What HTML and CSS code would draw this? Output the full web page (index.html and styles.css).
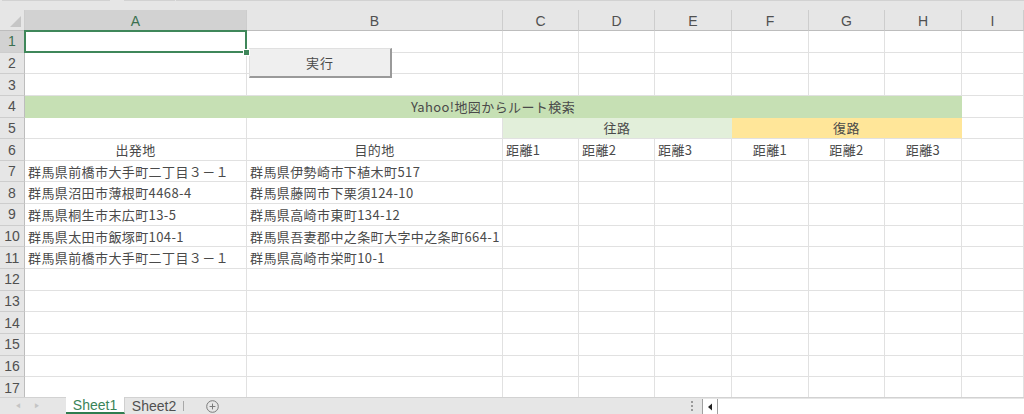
FILE: index.html
```html
<!DOCTYPE html>
<html lang="ja">
<head>
    <meta charset="UTF-8">
    <title>Sheet1</title>
    <link rel="stylesheet" href="styles.css">
</head>
<body>
    <div class="formula-edge">
        <span class="edge-box edge-1"></span>
        <span class="edge-box edge-2"></span>
        <span class="edge-box edge-3"></span>
    </div>

    <div class="sheet-wrap">
        <div class="sheet">
            <div class="corner"></div>
            <div class="col-head sel">A</div>
            <div class="col-head">B</div>
            <div class="col-head">C</div>
            <div class="col-head">D</div>
            <div class="col-head">E</div>
            <div class="col-head">F</div>
            <div class="col-head">G</div>
            <div class="col-head">H</div>
            <div class="col-head">I</div>

            <div class="row-head sel">1</div>
            <div class="cell active"><span class="handle"></span></div>
            <div class="cell"></div><div class="cell"></div><div class="cell"></div><div class="cell"></div>
            <div class="cell"></div><div class="cell"></div><div class="cell"></div><div class="cell"></div>

            <div class="row-head">2</div>
            <div class="cell"></div><div class="cell"></div><div class="cell"></div><div class="cell"></div><div class="cell"></div>
            <div class="cell"></div><div class="cell"></div><div class="cell"></div><div class="cell"></div>

            <div class="row-head">3</div>
            <div class="cell"></div><div class="cell"></div><div class="cell"></div><div class="cell"></div><div class="cell"></div>
            <div class="cell"></div><div class="cell"></div><div class="cell"></div><div class="cell"></div>

            <div class="row-head">4</div>
            <div class="cell center title">Yahoo!地図からルート検索</div>
            <div class="cell"></div>

            <div class="row-head">5</div>
            <div class="cell"></div><div class="cell"></div>
            <div class="cell center going">往路</div>
            <div class="cell center back">復路</div>
            <div class="cell"></div>

            <div class="row-head">6</div>
            <div class="cell center">出発地</div>
            <div class="cell center">目的地</div>
            <div class="cell">距離1</div>
            <div class="cell">距離2</div>
            <div class="cell">距離3</div>
            <div class="cell center">距離1</div>
            <div class="cell center">距離2</div>
            <div class="cell center">距離3</div>
            <div class="cell"></div>

            <div class="row-head">7</div>
            <div class="cell">群馬県前橋市大手町二丁目３－１</div>
            <div class="cell">群馬県伊勢崎市下植木町517</div>
            <div class="cell"></div><div class="cell"></div><div class="cell"></div><div class="cell"></div>
            <div class="cell"></div><div class="cell"></div><div class="cell"></div>

            <div class="row-head">8</div>
            <div class="cell">群馬県沼田市薄根町4468-4</div>
            <div class="cell">群馬県藤岡市下栗須124-10</div>
            <div class="cell"></div><div class="cell"></div><div class="cell"></div><div class="cell"></div>
            <div class="cell"></div><div class="cell"></div><div class="cell"></div>

            <div class="row-head">9</div>
            <div class="cell">群馬県桐生市末広町13-5</div>
            <div class="cell">群馬県高崎市東町134-12</div>
            <div class="cell"></div><div class="cell"></div><div class="cell"></div><div class="cell"></div>
            <div class="cell"></div><div class="cell"></div><div class="cell"></div>

            <div class="row-head">10</div>
            <div class="cell">群馬県太田市飯塚町104-1</div>
            <div class="cell overflow">群馬県吾妻郡中之条町大字中之条町664-1</div>
            <div class="cell"></div><div class="cell"></div><div class="cell"></div><div class="cell"></div>
            <div class="cell"></div><div class="cell"></div><div class="cell"></div>

            <div class="row-head">11</div>
            <div class="cell">群馬県前橋市大手町二丁目３－１</div>
            <div class="cell">群馬県高崎市栄町10-1</div>
            <div class="cell"></div><div class="cell"></div><div class="cell"></div><div class="cell"></div>
            <div class="cell"></div><div class="cell"></div><div class="cell"></div>

            <div class="row-head">12</div>
            <div class="cell"></div><div class="cell"></div><div class="cell"></div><div class="cell"></div><div class="cell"></div>
            <div class="cell"></div><div class="cell"></div><div class="cell"></div><div class="cell"></div>

            <div class="row-head">13</div>
            <div class="cell"></div><div class="cell"></div><div class="cell"></div><div class="cell"></div><div class="cell"></div>
            <div class="cell"></div><div class="cell"></div><div class="cell"></div><div class="cell"></div>

            <div class="row-head">14</div>
            <div class="cell"></div><div class="cell"></div><div class="cell"></div><div class="cell"></div><div class="cell"></div>
            <div class="cell"></div><div class="cell"></div><div class="cell"></div><div class="cell"></div>

            <div class="row-head">15</div>
            <div class="cell"></div><div class="cell"></div><div class="cell"></div><div class="cell"></div><div class="cell"></div>
            <div class="cell"></div><div class="cell"></div><div class="cell"></div><div class="cell"></div>

            <div class="row-head">16</div>
            <div class="cell"></div><div class="cell"></div><div class="cell"></div><div class="cell"></div><div class="cell"></div>
            <div class="cell"></div><div class="cell"></div><div class="cell"></div><div class="cell"></div>

            <div class="row-head">17</div>
            <div class="cell"></div><div class="cell"></div><div class="cell"></div><div class="cell"></div><div class="cell"></div>
            <div class="cell"></div><div class="cell"></div><div class="cell"></div><div class="cell"></div>
        </div>

        <button class="run-button">実行</button>
    </div>

    <div class="tab-bar">
        <div class="tab-nav">
            <span class="nav-arrow">&#9664;</span>
            <span class="nav-arrow">&#9654;</span>
        </div>
        <div class="tab active-tab">Sheet1</div>
        <div class="tab">Sheet2</div>
        <span class="tab-sep"></span>
        <svg class="add-sheet" width="13" height="13" viewBox="0 0 13 13">
            <circle cx="6.5" cy="6.5" r="5.8" fill="none" stroke="#7a7a7a" stroke-width="1"/>
            <path d="M6.5 3.6v5.8M3.6 6.5h5.8" stroke="#7a7a7a" stroke-width="1"/>
        </svg>
        <div class="tab-spacer"></div>
        <div class="split-dots"><i></i><i></i><i></i></div>
        <div class="hscroll">
            <span class="hscroll-btn">
                <svg width="6" height="8" viewBox="0 0 6 8"><path d="M5 0.5v7L1 4z" fill="#222"/></svg>
            </span>
            <span class="hscroll-track"></span>
        </div>
    </div>
</body>
</html>
```

FILE: styles.css
```css
:root {
    --header-bg: #e6e6e6;
    --header-sel: #d2d2d2;
    --grid-line: #e1e1e1;
    --header-line: #cdcdcd;
    --text-color: #4a4a4a;
    --excel-green: #3f875a;
}

body {
    margin: 0;
    width: 1024px;
    height: 414px;
    overflow: hidden;
    background: #ffffff;
    font-family: "Noto Sans CJK JP", "Noto Sans", sans-serif;
    color: var(--text-color);
}

/* bottom edge of the formula bar */
.formula-edge {
    height: 10px;
    background: var(--header-bg);
    display: flex;
    align-items: flex-start;
}

.edge-box {
    height: 1px;
    background: #d2d2d2;
}

.edge-1 { margin-left: 2px; width: 108px; }
.edge-2 { margin-left: 14px; width: 51px; }
.edge-3 { margin-left: 1px; flex-grow: 1; }

.sheet-wrap {
    position: relative;
    height: 387px;
    overflow: hidden;
}

.sheet {
    display: grid;
    grid-template-columns: 25px 222px 256px 76px 76px 77px 77px 76px 77px 1fr;
    grid-template-rows: 21px;
    grid-auto-rows: 21.65px;
    font-size: 13px;
}

.corner {
    background: var(--header-bg);
    border-right: 1px solid var(--header-line);
    border-bottom: 1px solid #bdbdbd;
    position: relative;
}

.corner::after {
    content: "";
    position: absolute;
    right: 3px;
    bottom: 3px;
    border-style: solid;
    border-width: 0 0 11px 11px;
    border-color: transparent transparent #c6c6c6 transparent;
}

.col-head {
    background: var(--header-bg);
    border-right: 1px solid var(--header-line);
    border-bottom: 1px solid #bdbdbd;
    display: flex;
    align-items: center;
    justify-content: center;
    font-family: "Liberation Sans", Arial, sans-serif;
    font-size: 14px;
    color: #505050;
    padding-top: 2px;
    box-sizing: border-box;
}

.col-head.sel {
    background: var(--header-sel);
    color: #3b7050;
    border-bottom: 1px solid #8fa896;
}

.row-head {
    background: var(--header-bg);
    border-right: 1px solid #bdbdbd;
    border-bottom: 1px solid var(--header-line);
    display: flex;
    align-items: center;
    justify-content: center;
    font-family: "Liberation Sans", Arial, sans-serif;
    font-size: 14px;
    color: #505050;
}

.row-head.sel {
    background: var(--header-sel);
    color: #3b7050;
}

.cell {
    border-right: 1px solid var(--grid-line);
    border-bottom: 1px solid var(--grid-line);
    padding: 0 3px;
    display: flex;
    align-items: center;
    white-space: nowrap;
    line-height: 1;
    position: relative;
    letter-spacing: 0.4px;
}

.cell.center {
    justify-content: center;
}

.cell.overflow {
    overflow: visible;
    z-index: 1;
}

.cell.title {
    grid-column: span 8;
    background: #c6e0b4;
    border-color: #c6e0b4;
}

.cell.going {
    grid-column: span 3;
    background: #e2efda;
    border-right-color: #e2efda;
}

.cell.back {
    grid-column: span 3;
    background: #ffe699;
    border-right-color: #ffe699;
}

.cell.active {
    z-index: 2;
}

.cell.active::before {
    content: "";
    position: absolute;
    left: -1px;
    top: -1px;
    right: -1px;
    bottom: -1px;
    border: 2px solid var(--excel-green);
}

.handle {
    position: absolute;
    right: -4px;
    bottom: -4px;
    width: 5px;
    height: 5px;
    background: var(--excel-green);
    border: 1px solid #ffffff;
}

.run-button {
    position: absolute;
    left: 249px;
    top: 38px;
    width: 143px;
    height: 30px;
    background: #efefef;
    border: 1px solid #e0e0e0;
    border-right: 2px solid #9a9a9a;
    border-bottom: 2px solid #9a9a9a;
    font-family: "Noto Sans CJK JP", sans-serif;
    font-size: 13px;
    color: #4a4a4a;
    letter-spacing: 1px;
    padding: 0;
}

.tab-bar {
    height: 17px;
    background: #e6e6e6;
    border-top: 1px solid #d2d2d2;
    display: flex;
    align-items: stretch;
    box-sizing: border-box;
    font-family: "Liberation Sans", Arial, sans-serif;
    font-size: 14px;
}

.tab-nav {
    width: 66px;
    display: flex;
    align-items: center;
    gap: 13px;
    padding-left: 15px;
    box-sizing: border-box;
}

.nav-arrow {
    font-size: 6px;
    color: #c4c4c4;
}

.tab {
    width: 58px;
    display: flex;
    align-items: center;
    justify-content: center;
    color: #505050;
    box-sizing: border-box;
    margin-top: -1px;
}

.active-tab {
    background: #ffffff;
    color: #3a8458;
    border-bottom: 2px solid #2f7d4f;
    border-right: 1px solid #cfcfcf;
    width: 59px;
}

.tab-sep {
    width: 1px;
    background: #a8a8a8;
    margin: 3px 0 3px 0;
}

.add-sheet {
    margin: 2px 0 0 22px;
}

.tab-spacer {
    flex-grow: 1;
}

.split-dots {
    display: flex;
    flex-direction: column;
    justify-content: center;
    gap: 2px;
    width: 11px;
}

.split-dots i {
    width: 2px;
    height: 2px;
    background: #9a9a9a;
}

.hscroll {
    width: 321px;
    display: flex;
    background: #ffffff;
    border-left: 1px solid #a0a0a0;
    margin-top: 1px;
}

.hscroll-btn {
    width: 14px;
    display: flex;
    align-items: center;
    justify-content: center;
    border-right: 1px solid #a0a0a0;
}

.hscroll-track {
    flex-grow: 1;
}
```
